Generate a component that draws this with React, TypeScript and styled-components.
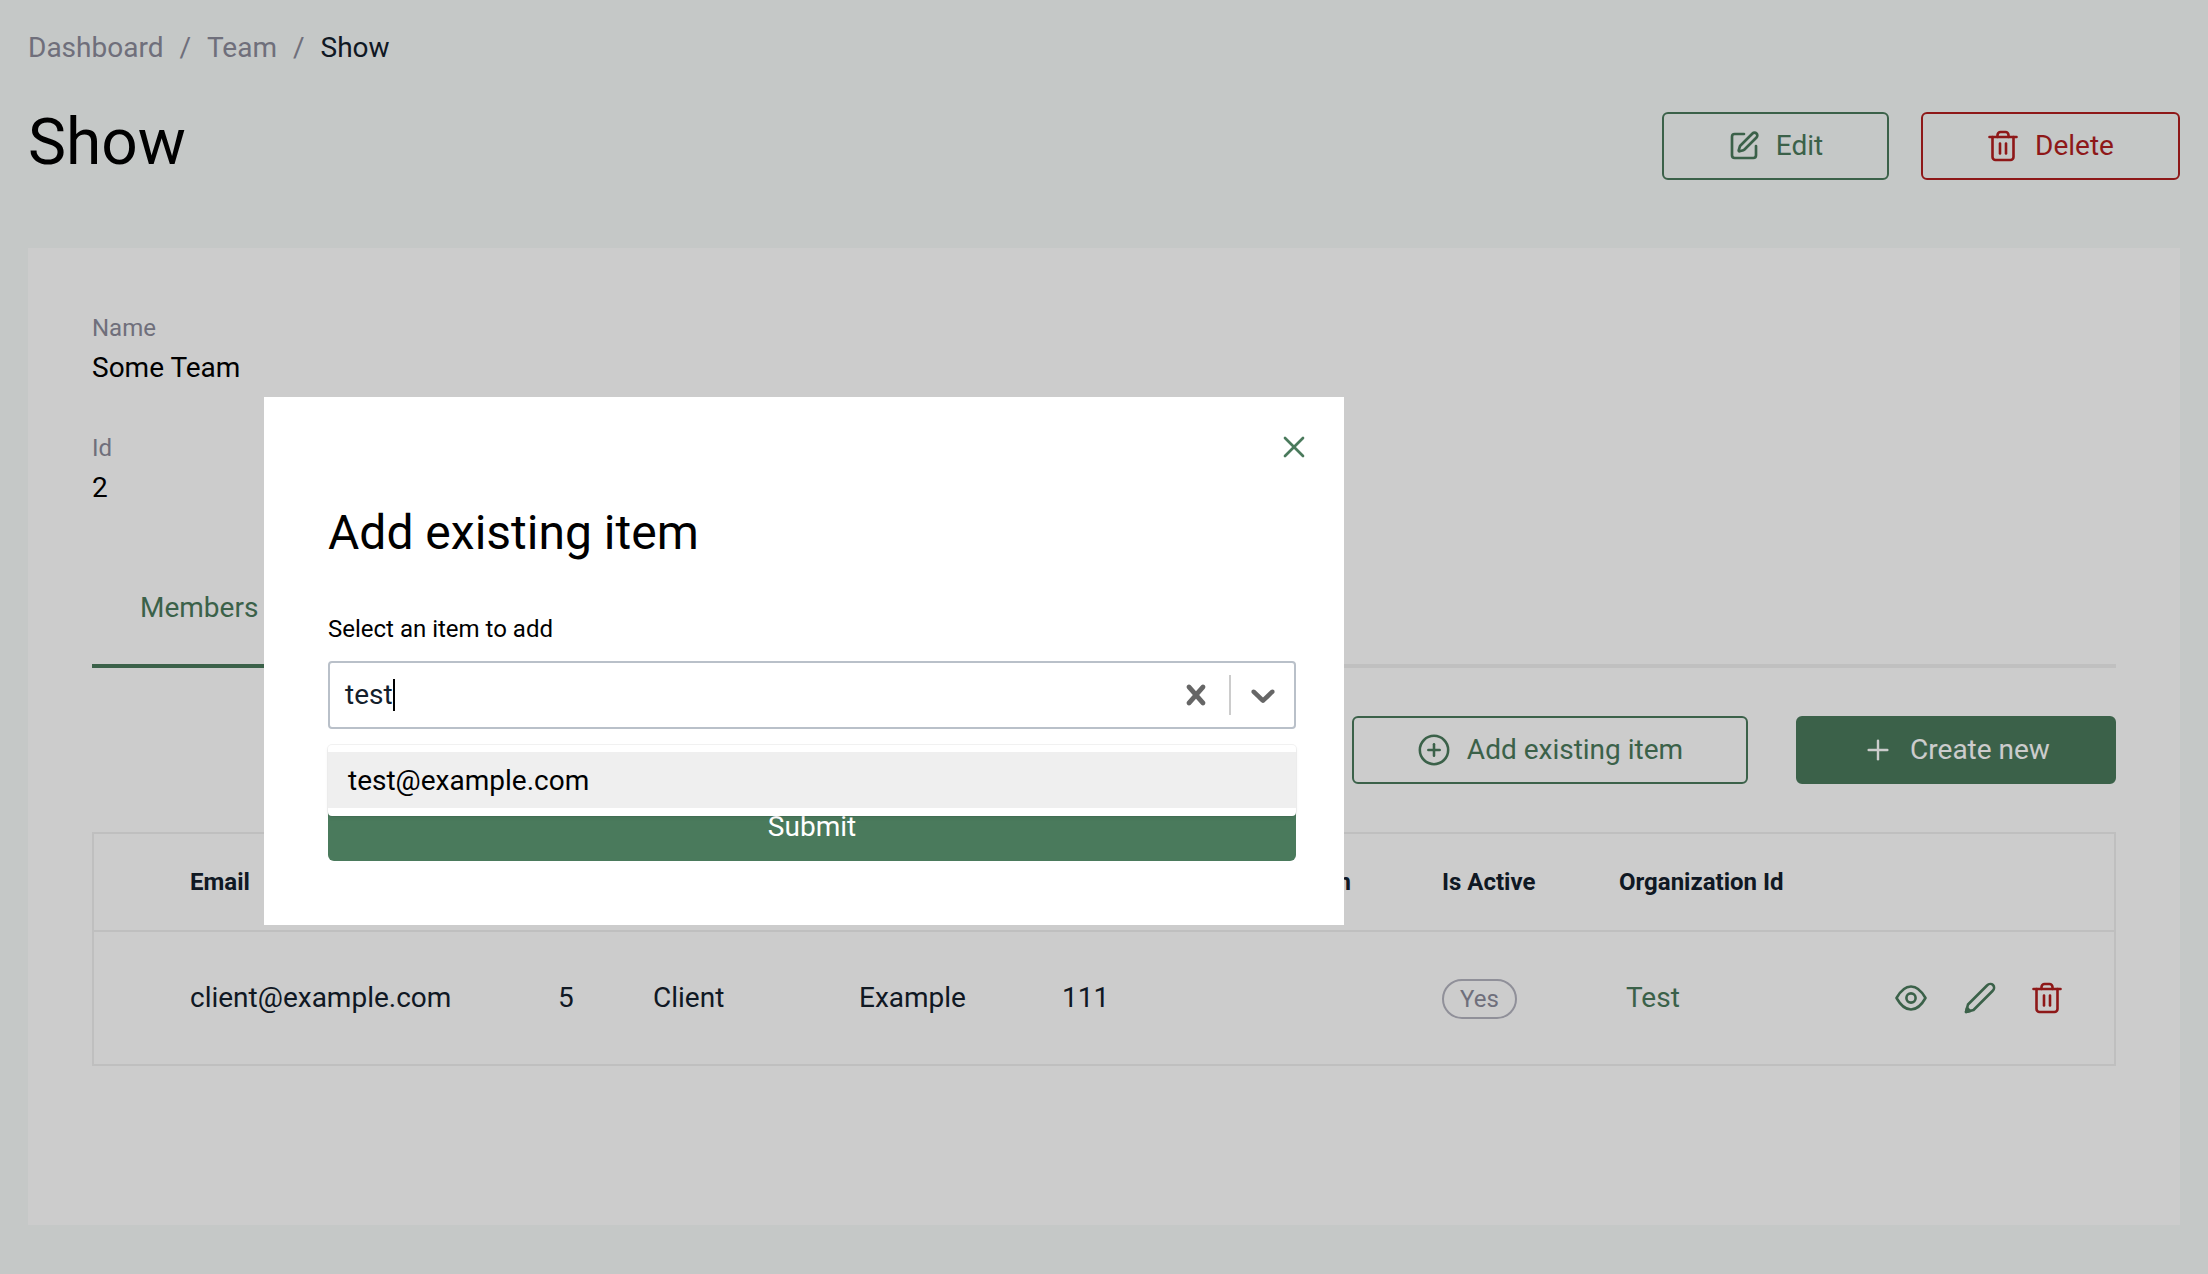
import React from 'react';
import styled, { createGlobalStyle } from 'styled-components';
import { CirclePlus, Plus, SquarePen, X } from 'lucide-react';

const GREEN = '#4a7a5c';
const RED = '#b21f1f';
const INK = '#13202c';

const GlobalStyle = createGlobalStyle`
  * { box-sizing: border-box; }
  html, body { margin: 0; padding: 0; }
  body {
    background: #f7faf9;
    color: ${INK};
    font-family: Roboto, "Liberation Sans", sans-serif;
  }
`;

const Page = styled.div`
  height: 1274px;
  padding: 29px 28px 49px;
  display: flex;
  flex-direction: column;
  overflow: hidden;
`;

const Breadcrumbs = styled.nav`
  display: flex;
  gap: 16px;
  font-size: 28px;
  line-height: 38px;
  color: #8b8b9a;
`;

const Crumb = styled.span<{ $current?: boolean }>`
  color: ${(p) => (p.$current ? INK : '#8b8b9a')};
`;

const PageHead = styled.header`
  margin: 38px 0 67px;
  display: flex;
  align-items: flex-start;
  justify-content: space-between;
`;

const Title = styled.h1`
  margin: 0;
  font-size: 64px;
  font-weight: 400;
  line-height: 76px;
  color: #000;
`;

const Actions = styled.div`
  display: flex;
  gap: 32px;
  margin-top: 7px;
`;

const Button = styled.button<{ $color: string; $solid?: boolean; $width: number }>`
  width: ${(p) => p.$width}px;
  height: 68px;
  display: inline-flex;
  align-items: center;
  justify-content: center;
  gap: 16px;
  padding: 0 0 1px;
  font: 400 28px Roboto, sans-serif;
  border: 2px solid ${(p) => p.$color};
  border-radius: 6px;
  color: ${(p) => (p.$solid ? '#fff' : p.$color)};
  background: ${(p) => (p.$solid ? p.$color : 'transparent')};
`;

const Card = styled.main`
  flex: 1;
  background: #fff;
  padding: 64px 64px 0;
`;

const Field = styled.div`
  margin-bottom: 44px;
`;

const FieldLabel = styled.div`
  font-size: 24px;
  line-height: 32px;
  color: #8b8b9a;
`;

const FieldValue = styled.div`
  font-size: 28px;
  line-height: 40px;
  margin-top: 4px;
  color: #000;
`;

const Tabs = styled.div`
  margin-top: 80px;
  border-bottom: 4px solid #f0f0f0;
  display: flex;
`;

const Tab = styled.div`
  font-size: 28px;
  line-height: 40px;
  padding: 0 48px 36px;
  margin-bottom: -4px;
  color: ${GREEN};
  border-bottom: 4px solid ${GREEN};
`;

const Toolbar = styled.div`
  margin: 48px 0;
  display: flex;
  justify-content: flex-end;
  gap: 48px;
`;

const Table = styled.div`
  border: 2px solid #efefef;
`;

const Row = styled.div<{ $head?: boolean }>`
  display: grid;
  grid-template-columns: 368px 95px 206px 203px 200px 180px 177px 240px 1fr;
  align-items: center;
  padding-left: 96px;
  padding-bottom: ${(p) => (p.$head ? 0 : 2)}px;
  height: ${(p) => (p.$head ? 98 : 132)}px;
  font-size: ${(p) => (p.$head ? 24 : 28)}px;
  font-weight: ${(p) => (p.$head ? 700 : 400)};
  border-bottom: ${(p) => (p.$head ? '2px solid #efefef' : 'none')};
`;

const Badge = styled.span`
  display: inline-flex;
  align-items: center;
  justify-content: center;
  width: 75px;
  height: 40px;
  margin-top: 3px;
  border: 2px solid #b4b4c0;
  border-radius: 20px;
  font-size: 24px;
  color: #8b8b9a;
`;

const OrgLink = styled.span`
  padding-left: 7px;
  color: ${GREEN};
`;

const RowIcons = styled.div`
  display: flex;
  align-items: center;
  gap: 32px;
  margin-left: 34px;
  margin-top: 2px;
`;

const Overlay = styled.div`
  position: fixed;
  inset: 0;
  padding: 397px 0 0 264px;
  background: rgba(0, 0, 0, 0.2);
`;

const Modal = styled.div`
  position: relative;
  width: 1080px;
  height: 528px;
  background: #fff;
  padding: 106px 48px 0 64px;
`;

const CloseIcon = styled.span`
  position: absolute;
  top: 32px;
  right: 32px;
  display: flex;
  color: ${GREEN};
`;

const ModalTitle = styled.h2`
  margin: 0 0 50px;
  font-size: 48px;
  font-weight: 400;
  line-height: 60px;
  color: #000;
`;

const SelectLabel = styled.label`
  display: block;
  font-size: 24px;
  line-height: 32px;
  margin-bottom: 16px;
  color: #000;
`;

const SelectWrap = styled.div`
  position: relative;
  margin-bottom: 64px;
`;

const SelectControl = styled.div`
  height: 68px;
  display: flex;
  align-items: center;
  padding-left: 15px;
  padding-bottom: 1px;
  border: 2px solid #b9c0c9;
  border-radius: 4px;
  background: #fff;
`;

const SelectValue = styled.div`
  flex: 1;
  font-size: 28px;
  line-height: 38px;
  display: flex;
  align-items: center;
`;

const Caret = styled.span`
  width: 2px;
  height: 32px;
  background: #000;
`;

const Separator = styled.span`
  width: 2px;
  height: 40px;
  margin: 0 12px 0 13px;
  background: #ccc;
`;

const SelectIcon = styled.svg`
  width: 40px;
  height: 40px;
  fill: #666;
  flex: none;
`;

const IconRow = styled.div`
  display: flex;
  align-items: center;
  margin-right: 11px;
`;

const Menu = styled.div`
  position: absolute;
  z-index: 2;
  top: 84px;
  left: 0;
  right: 0;
  height: 71px;
  padding: 7px 0 8px;
  background: #fff;
  border-radius: 4px;
  box-shadow: 0 0 0 1px rgba(0, 0, 0, 0.05), 0 2px 4px rgba(0, 0, 0, 0.06);
`;

const Option = styled.div`
  height: 56px;
  padding-left: 20px;
  display: flex;
  align-items: center;
  font-size: 28px;
  color: #000;
  background: #efefef;
`;

const Submit = styled.button`
  display: block;
  width: 100%;
  height: 68px;
  padding: 0 0 2px;
  border: none;
  border-radius: 6px;
  background: ${GREEN};
  color: #fff;
  font: 400 28px Roboto, sans-serif;
`;

function ThinPencil() {
  return (
    <svg width="36" height="36" viewBox="0 0 36 36" fill="none" stroke={GREEN} strokeWidth="2.6" strokeLinejoin="round" strokeLinecap="round">
      <path d="M5 32 L7 24.5 L26 5.5 C28 3.5 30.5 3.5 32 5 C33.5 6.5 33.5 9 31.5 11 L12.5 30 Z" />
      <path d="M5 32 L6 28 L9 31 Z" fill={GREEN} />
    </svg>
  );
}

function EyeIcon() {
  return (
    <svg width="36" height="36" viewBox="0 0 36 36" fill="none" stroke={GREEN} strokeWidth="2.6" strokeLinejoin="round">
      <path d="M3.5 18 C8 10 13 6.5 18 6.5 C23 6.5 28 10 32.5 18 C28 26 23 29.5 18 29.5 C13 29.5 8 26 3.5 18 Z" />
      <circle cx="18" cy="18" r="4.6" />
    </svg>
  );
}

function TrashIcon({ size }: { size: number }) {
  const inset = (32 - size) / 2;
  return (
    <svg width={size} height={size} viewBox={`${inset} ${inset} ${size} ${size}`} fill="none" stroke={RED} strokeWidth="2.6" strokeLinecap="round" strokeLinejoin="round">
      <path d="M2.5 7 H29.5" />
      <path d="M10.5 7 V5 a3 3 0 0 1 3-3 h5 a3 3 0 0 1 3 3 V7" />
      <path d="M5.5 7 V27 a3 3 0 0 0 3 3 h15 a3 3 0 0 0 3-3 V7" />
      <path d="M13 13.5 V23.5" />
      <path d="M19 13.5 V23.5" />
    </svg>
  );
}

export default function App() {
  return (
    <>
      <GlobalStyle />
      <Page>
        <Breadcrumbs>
          <Crumb>Dashboard</Crumb>
          <Crumb>/</Crumb>
          <Crumb>Team</Crumb>
          <Crumb>/</Crumb>
          <Crumb $current>Show</Crumb>
        </Breadcrumbs>

        <PageHead>
          <Title>Show</Title>
          <Actions>
            <Button $color={GREEN} $width={227}>
              <SquarePen size={32} strokeWidth={2} />
              Edit
            </Button>
            <Button $color={RED} $width={259}>
              <TrashIcon size={32} />
              Delete
            </Button>
          </Actions>
        </PageHead>

        <Card>
          <Field>
            <FieldLabel>Name</FieldLabel>
            <FieldValue>Some Team</FieldValue>
          </Field>
          <Field>
            <FieldLabel>Id</FieldLabel>
            <FieldValue>2</FieldValue>
          </Field>

          <Tabs>
            <Tab>Members</Tab>
          </Tabs>

          <Toolbar>
            <Button $color={GREEN} $width={396}>
              <CirclePlus size={34} strokeWidth={1.8} />
              Add existing item
            </Button>
            <Button $color={GREEN} $solid $width={320}>
              <Plus size={32} strokeWidth={1.8} />
              Create new
            </Button>
          </Toolbar>

          <Table>
            <Row $head>
              <span>Email</span>
              <span />
              <span />
              <span />
              <span />
              <span>Position</span>
              <span>Is Active</span>
              <span>Organization Id</span>
              <span />
            </Row>
            <Row>
              <span>client@example.com</span>
              <span>5</span>
              <span>Client</span>
              <span>Example</span>
              <span>111</span>
              <span />
              <span>
                <Badge>Yes</Badge>
              </span>
              <OrgLink>Test</OrgLink>
              <RowIcons>
                <EyeIcon />
                <ThinPencil />
                <TrashIcon size={36} />
              </RowIcons>
            </Row>
          </Table>
        </Card>
      </Page>

      <Overlay>
        <Modal>
          <CloseIcon>
            <X size={36} strokeWidth={1.8} />
          </CloseIcon>
          <ModalTitle>Add existing item</ModalTitle>
          <SelectLabel>Select an item to add</SelectLabel>
          <SelectWrap>
            <SelectControl>
              <SelectValue>
                test
                <Caret />
              </SelectValue>
              <IconRow>
                <SelectIcon viewBox="0 0 20 20">
                  <path d="M14.348 14.849c-0.469 0.469-1.229 0.469-1.697 0l-2.651-3.030-2.651 3.029c-0.469 0.469-1.229 0.469-1.697 0-0.469-0.469-0.469-1.229 0-1.697l2.758-3.15-2.759-3.152c-0.469-0.469-0.469-1.228 0-1.697s1.228-0.469 1.697 0l2.652 3.031 2.651-3.031c0.469-0.469 1.228-0.469 1.697 0s0.469 1.229 0 1.697l-2.758 3.152 2.758 3.15c0.469 0.469 0.469 1.229 0 1.698z" />
                </SelectIcon>
                <Separator />
                <SelectIcon viewBox="0 0 20 20">
                  <path d="M4.516 7.548c0.436-0.446 1.043-0.481 1.576 0l3.908 3.747 3.908-3.747c0.533-0.481 1.141-0.446 1.576 0 0.436 0.445 0.408 1.197 0 1.615-0.406 0.418-4.695 4.502-4.695 4.502-0.217 0.223-0.502 0.335-0.789 0.335s-0.572-0.112-0.791-0.335c0 0-4.287-4.084-4.695-4.502s-0.436-1.17 0-1.615z" />
                </SelectIcon>
              </IconRow>
            </SelectControl>
            <Menu>
              <Option>test@example.com</Option>
            </Menu>
          </SelectWrap>
          <Submit>Submit</Submit>
        </Modal>
      </Overlay>
    </>
  );
}
